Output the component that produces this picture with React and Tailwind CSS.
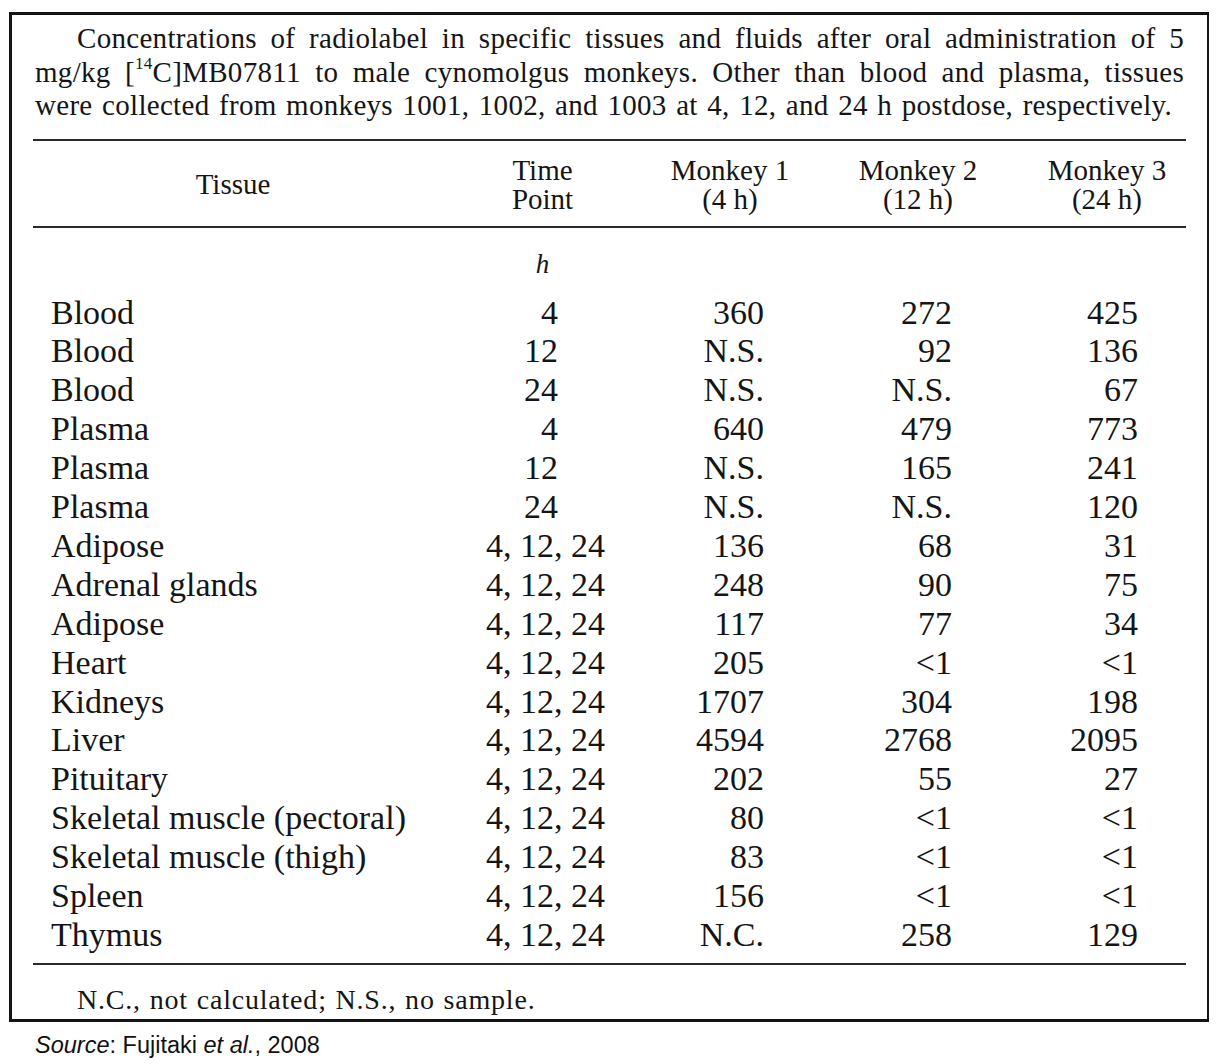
import React from 'react';

const rows = [
  { tissue: 'Blood', time: '4', m1: '360', m2: '272', m3: '425' },
  { tissue: 'Blood', time: '12', m1: 'N.S.', m2: '92', m3: '136' },
  { tissue: 'Blood', time: '24', m1: 'N.S.', m2: 'N.S.', m3: '67' },
  { tissue: 'Plasma', time: '4', m1: '640', m2: '479', m3: '773' },
  { tissue: 'Plasma', time: '12', m1: 'N.S.', m2: '165', m3: '241' },
  { tissue: 'Plasma', time: '24', m1: 'N.S.', m2: 'N.S.', m3: '120' },
  { tissue: 'Adipose', time: '4, 12, 24', m1: '136', m2: '68', m3: '31' },
  { tissue: 'Adrenal glands', time: '4, 12, 24', m1: '248', m2: '90', m3: '75' },
  { tissue: 'Adipose', time: '4, 12, 24', m1: '117', m2: '77', m3: '34' },
  { tissue: 'Heart', time: '4, 12, 24', m1: '205', m2: '<1', m3: '<1' },
  { tissue: 'Kidneys', time: '4, 12, 24', m1: '1707', m2: '304', m3: '198' },
  { tissue: 'Liver', time: '4, 12, 24', m1: '4594', m2: '2768', m3: '2095' },
  { tissue: 'Pituitary', time: '4, 12, 24', m1: '202', m2: '55', m3: '27' },
  { tissue: 'Skeletal muscle (pectoral)', time: '4, 12, 24', m1: '80', m2: '<1', m3: '<1' },
  { tissue: 'Skeletal muscle (thigh)', time: '4, 12, 24', m1: '83', m2: '<1', m3: '<1' },
  { tissue: 'Spleen', time: '4, 12, 24', m1: '156', m2: '<1', m3: '<1' },
  { tissue: 'Thymus', time: '4, 12, 24', m1: 'N.C.', m2: '258', m3: '129' },
];

const cols = 'grid grid-cols-[400px_219px_156px_220px_158px]';

const App = () => {
  return (
    <div className="min-h-[1064px] bg-white text-[#151515] font-['Liberation_Serif','Times_New_Roman',serif]">
      <div className="ml-[9px] pt-[12px] w-[1200px]">
        <div className="h-[1010px] border-[3px] border-r-2 border-[#141414] px-[21px] pt-[7px]">
          <div className="text-[29px] leading-[33.5px] tracking-[0.3px] [word-spacing:2px] px-[2px]">
            <div className="text-justify [text-align-last:justify] pl-[42px]">
              Concentrations of radiolabel in specific tissues and fluids after oral administration of 5
            </div>
            <div className="text-justify [text-align-last:justify]">
              mg/kg [<sup className="text-[17px] top-[-0.75em]">14</sup>C]MB07811 to male cynomolgus monkeys. Other than blood and plasma, tissues
            </div>
            <div>
              were collected from monkeys 1001, 1002, and 1003 at 4, 12, and 24 h postdose, respectively.
            </div>
          </div>

          <div className="mt-[16px] border-t-2 border-b-2 border-[#2a2a2a]">
            <div className={`${cols} items-center text-[29px] leading-[29px] text-center pt-[15px] pb-[12px]`}>
              <div>Tissue</div>
              <div>Time<br />Point</div>
              <div>Monkey 1<br />(4 h)</div>
              <div>Monkey 2<br />(12 h)</div>
              <div>Monkey 3<br />(24 h)</div>
            </div>
          </div>

          <div className={`${cols} text-[27px] leading-[39px] pt-[17px] pb-[10px]`}>
            <div></div>
            <div className="text-center italic">h</div>
          </div>

          <div className="text-[34px] leading-[38.9px] border-b-2 border-[#2a2a2a] pb-[8px]">
            {rows.map((r, i) => (
              <div key={i} className={cols}>
                <div className="pl-[18px]">{r.tissue}</div>
                <div className={r.time.length > 2 ? 'text-right pr-[47px]' : 'text-right pr-[94px]'}>{r.time}</div>
                <div className="text-right pr-[44px]">{r.m1}</div>
                <div className="text-right pr-[76px]">{r.m2}</div>
                <div className="text-right pr-[48px]">{r.m3}</div>
              </div>
            ))}
          </div>

          <div className="text-[28px] leading-[40px] tracking-[0.8px] [word-spacing:1px] pl-[44px] pt-[15px]">
            N.C., not calculated; N.S., no sample.
          </div>
        </div>
        <div className="mt-[10px] pl-[26px] text-[23.5px] leading-[27px] text-[#111] font-['Liberation_Sans',Arial,sans-serif]">
          <span className="italic">Source</span>: Fujitaki <span className="italic">et al.</span>, 2008
        </div>
      </div>
    </div>
  );
};

export default App;
